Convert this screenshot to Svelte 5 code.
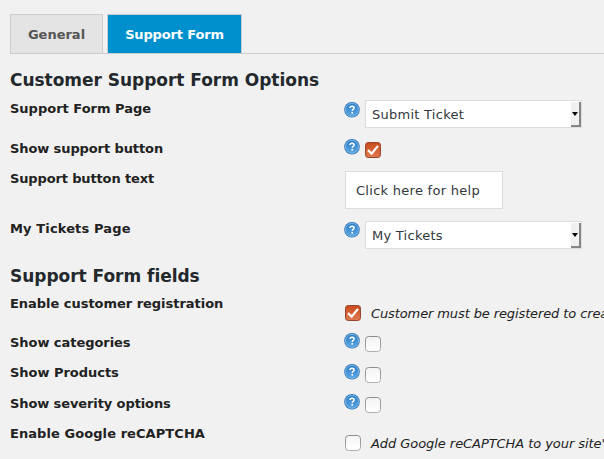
<script>
  const sections = [
    {
      title: 'Customer Support Form Options',
      titleTop: 14,
      rows: [
        { label: 'Support Form Page', height: 40, help: 4, type: 'select', value: 'Submit Ticket', top: 2 },
        { label: 'Show support button', spacing: -0.1, height: 30, help: 1, type: 'check', checked: true, top: 4 },
        { label: 'Support button text', spacing: -0.14, height: 50, type: 'text', value: 'Click here for help', top: 3 },
        { label: 'My Tickets Page', spacing: 0.13, height: 31, help: 4, type: 'select', value: 'My Tickets', top: 3 }
      ]
    },
    {
      title: 'Support Form fields',
      titleTop: 15,
      rows: [
        { label: 'Enable customer registration', spacing: -0.03, height: 39, type: 'check', checked: true, top: 12, note: 'Customer must be registered to create tickets', noteSpacing: -0.11 },
        { label: 'Show categories', spacing: -0.05, height: 30, help: 1, type: 'check', checked: false, top: 4 },
        { label: 'Show Products', spacing: -0.03, height: 31, help: 2, type: 'check', checked: false, top: 5 },
        { label: 'Show severity options', spacing: -0.1, height: 30, help: 1, type: 'check', checked: false, top: 4 },
        { label: 'Enable Google reCAPTCHA', spacing: 0.07, height: 36, type: 'check', checked: false, top: 12, note: "Add Google reCAPTCHA to your site's form", noteSpacing: -0.06 }
      ]
    }
  ];
</script>

<div class="page">
  <nav class="tabs">
    <span class="tab">General</span>
    <span class="tab active">Support Form</span>
  </nav>

  {#each sections as section}
    <h3 style="padding-top: {section.titleTop}px">{section.title}</h3>
    {#each section.rows as row}
      <div class="row" style="height: {row.height}px">
        <span class="label" style="letter-spacing: {row.spacing ?? 0}px">{row.label}</span>
        {#if row.help !== undefined}
          <svg class="help" style="margin-top: {row.help}px" width="16" height="16" viewBox="0 0 16 16">
            <defs>
              <linearGradient id="disc" x1="0" y1="0" x2="0" y2="1">
                <stop offset="0" stop-color="#2c7dc8" />
                <stop offset="1" stop-color="#5aa6e2" />
              </linearGradient>
            </defs>
            <circle cx="8" cy="7.8" r="7.8" fill="#2f76b8" />
            <circle cx="8" cy="7.8" r="6.5" fill="url(#disc)" stroke="#8fc3ec" stroke-width="0.8" />
            <path d="M5.9 6C6 4.8 6.8 4.3 8 4.3c1.3 0 2.1.6 2.1 1.6C10.1 7.2 8.2 7.3 8.2 8.9" fill="none" stroke="#fff" stroke-width="1.5" />
            <rect x="7.4" y="10" width="1.7" height="1.6" fill="#fff" />
          </svg>
        {/if}
        {#if row.type === 'select'}
          <div class="select" style="margin-top: {row.top}px">
            <span>{row.value}</span>
            <i class="button"><b></b></i>
          </div>
        {:else if row.type === 'text'}
          <div class="input" style="margin-top: {row.top}px">{row.value}</div>
        {:else}
          <svg class="check" style="margin-top: {row.top}px" width="16" height="16" viewBox="0 0 16 16">
            <defs>
              <linearGradient id="on" x1="0" y1="0" x2="0" y2="1">
                <stop offset="0" stop-color="#c84a1c" />
                <stop offset="1" stop-color="#e07a50" />
              </linearGradient>
              <linearGradient id="off" x1="0" y1="0" x2="0" y2="1">
                <stop offset="0" stop-color="#f3f3f3" />
                <stop offset="1" stop-color="#ffffff" />
              </linearGradient>
              <linearGradient id="edge" x1="0" y1="0" x2="0" y2="1">
                <stop offset="0" stop-color="#8c8c8c" />
                <stop offset="1" stop-color="#adadad" />
              </linearGradient>
            </defs>
            {#if row.checked}
              <rect x="0.5" y="0.5" width="15" height="15" rx="2.8" fill="url(#on)" stroke="#96462a" />
              <path d="M3 8.1 6.6 11.6 13 3.9" fill="none" stroke="#fff" stroke-width="2.2" />
            {:else}
              <rect x="0.5" y="0.5" width="15" height="15" rx="3.2" fill="url(#off)" stroke="url(#edge)" />
            {/if}
          </svg>
          {#if row.note}<em style="letter-spacing: {row.noteSpacing}px">{row.note}</em>{/if}
        {/if}
      </div>
    {/each}
  {/each}
</div>

<style>
  :global(body) {
    background: #f1f1f1;
    overflow: hidden;
  }
  .page {
    box-sizing: border-box;
    width: 604px;
    height: 459px;
    overflow: hidden;
    padding: 14px 0 0 10px;
    background: #f1f1f1;
    color: #23282d;
    font-family: 'DejaVu Sans', sans-serif;
    font-size: 13px;
    white-space: nowrap;
  }
  .tabs {
    display: flex;
    gap: 4px;
    box-sizing: border-box;
    height: 40px;
    border-bottom: 1px solid #ccc;
  }
  .tab {
    box-sizing: border-box;
    width: 93px;
    height: 39px;
    border: 1px solid #ccc;
    border-bottom: 0;
    background: #e4e4e4;
    color: #555;
    font-weight: bold;
    line-height: 39px;
    text-align: center;
  }
  .tab.active {
    width: 135px;
    background: #0090ce;
    color: #fff;
    letter-spacing: -0.16px;
  }
  h3 {
    box-sizing: border-box;
    margin: 0;
    height: 44px;
    font-size: 17px;
    line-height: 24px;
    font-weight: bold;
    letter-spacing: -0.03px;
  }
  .row {
    display: flex;
    align-items: flex-start;
  }
  .label {
    width: 335px;
    flex: none;
    color: #222;
    font-weight: bold;
    line-height: 22px;
  }
  .help {
    flex: none;
    margin-left: -1px;
    margin-right: 5px;
  }
  .check {
    flex: none;
  }
  .select {
    box-sizing: border-box;
    display: flex;
    justify-content: space-between;
    width: 217px;
    height: 28px;
    border: 1px solid #ddd;
    background: #fff;
    padding-left: 6px;
    color: #32373c;
    line-height: 27px;
    letter-spacing: 0.26px;
  }
  .button {
    box-sizing: border-box;
    display: flex;
    align-items: center;
    justify-content: center;
    width: 10px;
    height: 25px;
    margin-top: 1px;
    border-right: 2px solid #858585;
    border-bottom: 2px solid #858585;
    background: #f0f0f0;
  }
  .button b {
    border: 3px solid transparent;
    border-top: 4px solid #000;
    border-bottom: 0;
  }
  .input {
    box-sizing: border-box;
    width: 158px;
    height: 38px;
    border: 1px solid #ddd;
    background: #fff;
    padding-left: 10px;
    color: #32373c;
    line-height: 37px;
    letter-spacing: 0.28px;
  }
  em {
    margin: 11px 0 0 10px;
    color: #222;
    line-height: 20px;
  }
</style>
